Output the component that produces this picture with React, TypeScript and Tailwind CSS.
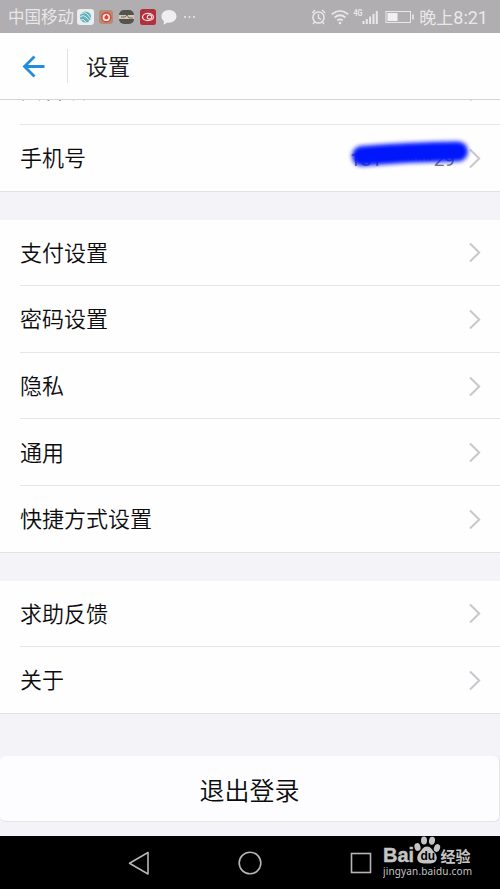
import type { ReactNode } from 'react';

function Chevron() {
  return (
    <svg className="h-5 w-3 shrink-0" viewBox="0 0 12 20" fill="none" stroke="#c7c7cc" strokeWidth="2">
      <path d="M1 1.500 10.200 10.500 1 19.500" />
    </svg>
  );
}

interface RowProps {
  label: string;
  last?: boolean;
  children?: ReactNode;
}

function Row({ label, last, children }: RowProps) {
  return (
    <div className="pl-5">
      <div
        className={
          last
            ? 'flex h-[65.6px] items-center justify-between pr-[19px]'
            : 'flex h-[66.6px] items-center justify-between border-b border-[#e6e6e8] pr-[19px]'
        }
      >
        <span className="pt-[3px] text-[22px] leading-none">{label}</span>
        <div className="flex items-center">
          {children}
          <Chevron />
        </div>
      </div>
    </div>
  );
}

function Group({ items }: { items: string[] }) {
  return (
    <div className="border-b border-[#e2e1e5] bg-[#fefefe]">
      {items.map((item, i) => (
        <Row key={item} label={item} last={i === items.length - 1} />
      ))}
    </div>
  );
}

function StatusBar() {
  return (
    <div className="flex h-[33px] shrink-0 items-center justify-between bg-[#b0aeb0] pr-3 pl-2 text-[#e9e8e9]">
      <div className="flex items-center">
        <span className="w-[69px] pt-[3px] text-[16.5px] leading-none whitespace-nowrap">中国移动</span>
        <svg className="h-[18px] w-[120px]" viewBox="0 0 120 18">
          <rect x="0" y="1" width="17" height="16" rx="3" fill="#e9eeee" />
          <circle cx="8.5" cy="9" r="5.6" fill="#63b0ba" />
          <path d="M4 6q4-3 7 1t3 4M3 9q3-3 6 0t4 4M4 12q2-2 5 2" stroke="#d7efee" fill="none" />
          <rect x="22" y="2" width="14" height="14" rx="3" fill="#b78c74" />
          <circle cx="29.3" cy="9.2" r="5.2" fill="#d9473c" />
          <circle cx="29.3" cy="9.4" r="3.7" fill="#f8e9e4" />
          <path d="M29.500 6.500q2.500 2.200 1.600 3.900-1.800 1.600-3.600 0-.5-1.800 2-3.900Z" fill="#d9473c" />
          <rect x="42" y="2" width="15" height="14" rx="5" fill="#55534e" />
          <path d="M42 7h15v4H42z" fill="#d1c9b6" />
          <path d="M44 9h4l2-2 2 3h4" stroke="#716b60" fill="none" />
          <rect x="63" y="1" width="16" height="16" rx="2.5" fill="#b2303b" />
          <ellipse cx="71" cy="9" rx="5.5" ry="3.6" stroke="#f1dfe1" strokeWidth="1.3" fill="none" />
          <circle cx="72.5" cy="9" r="2.2" stroke="#f1dfe1" strokeWidth="1.2" fill="none" />
          <path d="M92 2c4.300 0 7.500 2.800 7.500 6.300S96.300 14.700 92 14.700l-1.500-.1-4 2.200.5-3.600c-1.600-1.200-2.500-2.900-2.500-4.900C84.500 4.800 87.700 2 92 2Z" fill="#f0eff0" />
          <circle cx="108" cy="9" r="1" fill="#e9e8e9" />
          <circle cx="112.500" cy="9" r="1" fill="#e9e8e9" />
          <circle cx="117" cy="9" r="1" fill="#e9e8e9" />
        </svg>
      </div>
      <div className="flex items-center">
        <svg className="h-5 w-[108px]" viewBox="0 0 108 20" fill="none" stroke="#e9e8e9" strokeWidth="1.500">
          <g transform="translate(-1.500 0)">
            <circle cx="8" cy="10.500" r="5.600" />
            <path d="M8 7v4l2.500 1.300M1.800 6 4.500 3M14.800 6 11.500 3M4 15l-1.500 2M12 15l1.500 2" strokeWidth="1.300" />
            <path d="M21.300 7.300q8.200-6.800 16.400 0M24 10.500q5.500-4.500 11 0M26.800 13.500q2.700-2.200 5.400 0" strokeWidth="1.800" />
            <circle cx="29.500" cy="16" r="1.300" fill="#e9e8e9" stroke="none" />
            <text x="43" y="8.500" fontSize="9" fontWeight="700" textLength="9" lengthAdjust="spacingAndGlyphs" fill="#e9e8e9" stroke="none">4G</text>
            <path d="M53 14v3M56.300 12v5M59.600 9.500v7.500M63 7v10M66.300 4v13" strokeWidth="2" />
            <rect x="75.500" y="4.500" width="24.500" height="11" strokeWidth="1" />
            <rect x="77" y="6" width="10" height="8" fill="#f1f0f1" stroke="none" />
            <path d="M102.500 7.500v5" strokeWidth="1.700" />
          </g>
        </svg>
        <span className="-ml-px pt-[3px] text-[17px] leading-none whitespace-nowrap">
          晚上<span className="text-[18px]">8:21</span>
        </span>
      </div>
    </div>
  );
}

function Watermark() {
  return (
    <div className="absolute top-[-2px] left-[383px]">
      <svg className="h-[48px] w-[94px]" viewBox="0 0 94 48" fill="#c4c4c4">
        <text x="0" y="27.500" fontSize="20" fontWeight="700" fontFamily="Liberation Sans" textLength="31" lengthAdjust="spacingAndGlyphs" stroke="#c4c4c4" strokeWidth="0.400">Bai</text>
        <ellipse cx="34.500" cy="13" rx="3" ry="4" transform="rotate(-15 34.500 13)" />
        <ellipse cx="41" cy="6.500" rx="3" ry="4" />
        <ellipse cx="49" cy="6.800" rx="3" ry="4" transform="rotate(10 49 6.800)" />
        <ellipse cx="54" cy="14" rx="3" ry="4" transform="rotate(20 54 14)" />
        <path d="M44 12.500c4 0 5 3.500 7.500 6 3 3 3.500 9-1.500 10.500-3 .8-9 .8-12 0-5-1.500-4.500-7.500-1.500-10.500 2.500-2.500 3.500-6 7.500-6Z" />
        <text x="37.500" y="26" fontSize="12" fontWeight="700" fontFamily="Liberation Sans" fill="#000">du</text>
        <text x="57.500" y="27.500" fontSize="15" fontWeight="700">经验</text>
        <text x="0" y="41" fontSize="10" fontFamily="Noto Sans" textLength="89">jingyan.baidu.com</text>
      </svg>
    </div>
  );
}

export default function App() {
  return (
    <div className="flex h-[889px] w-[500px] flex-col overflow-hidden bg-[#f4f3f8] font-[Roboto,'Noto_Sans_CJK_SC',sans-serif] text-[#1c1c1f]">
      <StatusBar />

      <header className="flex h-[67px] shrink-0 items-center border-b border-[#d5d5d8] bg-[#fefefe] pl-[22px]">
        <svg className="h-6 w-6" viewBox="0 0 24 24" fill="none" stroke="#238ddb" strokeWidth="2.800">
          <path d="M22.500 12.500H2.500M12.500 2.500 2.500 12.500l10 10" />
        </svg>
        <div className="ml-[21px] h-[34px] w-px bg-[#e1e1e4]" />
        <h1 className="ml-[18px] pt-1 text-[22px] leading-none">设置</h1>
      </header>

      <main className="flex flex-1 flex-col [font-weight:350] text-[#0c0c0e]">
        <div className="border-b border-[#e2e1e5] bg-[#fefefe]">
          {/* row scrolled partly under the header */}
          <div className="flex h-[25px] flex-col justify-end overflow-hidden">
            <div className="ml-5 flex h-[66.6px] shrink-0 items-center justify-between border-b border-[#e6e6e8] pr-[19px]">
              <span className="text-[22px] leading-none">实名认证</span>
              <Chevron />
            </div>
          </div>
          <Row label="手机号" last>
            <div className="relative mr-3.5 h-7 w-[105px] text-[19px] leading-7 font-normal text-[#75757a]">
              <div className="flex justify-between pt-0.5">
                <span>181</span>
                <span>******</span>
                <span>29</span>
              </div>
              <svg className="absolute -top-3 -left-3 h-10 w-[142px]" viewBox="0 0 142 40">
                <defs>
                  <filter id="soft" filterUnits="userSpaceOnUse" x="0" y="0" width="142" height="40">
                    <feGaussianBlur stdDeviation="2" />
                  </filter>
                </defs>
                <path d="M24 24Q70 20 120 19.500" stroke="#0519fb" strokeWidth="20" strokeLinecap="round" fill="none" filter="url(#soft)" />
              </svg>
            </div>
          </Row>
        </div>

        <div className="mt-7">
          <Group items={['支付设置', '密码设置', '隐私', '通用', '快捷方式设置']} />
        </div>
        <div className="mt-7">
          <Group items={['求助反馈', '关于']} />
        </div>

        <button className="mt-[42px] h-[66px] w-full rounded-md border-r border-b border-[#e5e4e9] bg-[#fdfcff] pt-1.5 text-[25px] leading-none">
          退出登录
        </button>
      </main>

      <nav className="relative h-[53px] shrink-0 bg-black">
        <div className="flex h-full items-center justify-between pr-[127px] pl-[127px]">
          <svg className="h-6 w-6" viewBox="0 0 24 24" fill="none" stroke="#b5b5b5" strokeWidth="1.600" strokeLinejoin="round">
            <path d="M21 1.500v21.500L2.500 12.200Z" />
          </svg>
          <svg className="h-6 w-6" viewBox="0 0 24 24" fill="none" stroke="#b5b5b5" strokeWidth="1.600">
            <circle cx="12" cy="12" r="10.800" />
          </svg>
          <svg className="h-6 w-6" viewBox="0 0 24 24" fill="none" stroke="#b5b5b5" strokeWidth="1.600">
            <rect x="2.500" y="2.500" width="19" height="19" />
          </svg>
        </div>
        <Watermark />
      </nav>
    </div>
  );
}
